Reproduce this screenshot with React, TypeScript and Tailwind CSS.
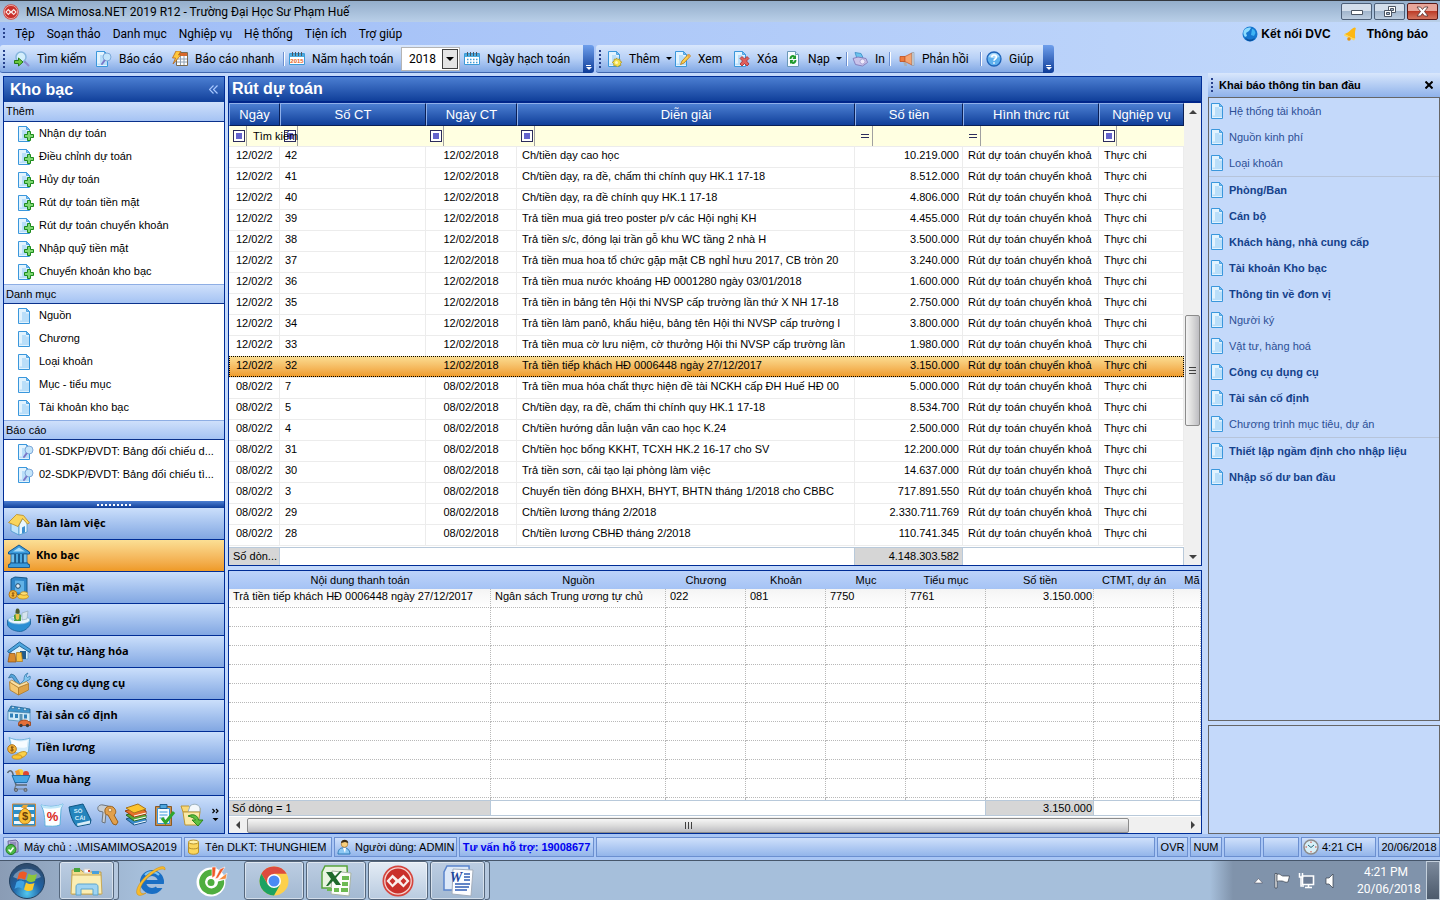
import type { ReactNode } from 'react'
import clsx from 'clsx'

interface IconProps {
  className?: string
}

interface Voucher {
  day: string
  no: string
  date: string
  text: string
  amount: string
  selected?: boolean
}

const menus = ['Tệp', 'Soạn thảo', 'Danh mục', 'Nghiệp vụ', 'Hệ thống', 'Tiện ích', 'Trợ giúp']

const vouchers: Voucher[] = [
  { day: '12/02/2', no: '42', date: '12/02/2018', text: 'Ch/tiền dạy cao học', amount: '10.219.000' },
  { day: '12/02/2', no: '41', date: '12/02/2018', text: 'Ch/tiền dạy, ra đề, chấm thi chính quy HK.1 17-18', amount: '8.512.000' },
  { day: '12/02/2', no: '40', date: '12/02/2018', text: 'Ch/tiền dạy, ra đề chính quy HK.1 17-18', amount: '4.806.000' },
  { day: '12/02/2', no: '39', date: '12/02/2018', text: 'Trả tiền mua giá treo poster p/v các Hội nghị KH', amount: '4.455.000' },
  { day: '12/02/2', no: '38', date: '12/02/2018', text: 'Trả tiền s/c, đóng lại trần gỗ khu WC tầng 2 nhà H', amount: '3.500.000' },
  { day: '12/02/2', no: '37', date: '12/02/2018', text: 'Trả tiền mua hoa tổ chức gặp mặt CB nghỉ hưu 2017, CB tròn 20', amount: '3.240.000' },
  { day: '12/02/2', no: '36', date: '12/02/2018', text: 'Trả tiền mua nước khoáng HĐ 0001280 ngày 03/01/2018', amount: '1.600.000' },
  { day: '12/02/2', no: '35', date: '12/02/2018', text: 'Trả tiền in bảng tên Hội thi NVSP cấp trường lần thứ X NH 17-18', amount: '2.750.000' },
  { day: '12/02/2', no: '34', date: '12/02/2018', text: 'Trả tiền làm panô, khẩu hiệu, bảng tên Hội thi NVSP cấp trường l', amount: '3.800.000' },
  { day: '12/02/2', no: '33', date: '12/02/2018', text: 'Trả tiền mua cờ lưu niệm, cờ thưởng Hội thi NVSP cấp trường lần', amount: '1.980.000' },
  { day: '12/02/2', no: '32', date: '12/02/2018', text: 'Trả tiền tiếp khách HĐ 0006448 ngày 27/12/2017', amount: '3.150.000', selected: true },
  { day: '08/02/2', no: '7', date: '08/02/2018', text: 'Trả tiền mua hóa chất thực hiện đề tài NCKH cấp ĐH Huế HĐ 00', amount: '5.000.000' },
  { day: '08/02/2', no: '5', date: '08/02/2018', text: 'Ch/tiền dạy, ra đề, chấm thi chính quy HK.1 17-18', amount: '8.534.700' },
  { day: '08/02/2', no: '4', date: '08/02/2018', text: 'Ch/tiền hướng dẫn luận văn cao học K.24', amount: '2.500.000' },
  { day: '08/02/2', no: '31', date: '08/02/2018', text: 'Ch/tiền học bổng KKHT, TCXH HK.2 16-17 cho SV', amount: '12.200.000' },
  { day: '08/02/2', no: '30', date: '08/02/2018', text: 'Trả tiền sơn, cải tạo lại phòng làm việc', amount: '14.637.000' },
  { day: '08/02/2', no: '3', date: '08/02/2018', text: 'Chuyển tiền đóng BHXH, BHYT, BHTN tháng 1/2018 cho CBBC', amount: '717.891.550' },
  { day: '08/02/2', no: '29', date: '08/02/2018', text: 'Ch/tiền lương tháng 2/2018', amount: '2.330.711.769' },
  { day: '08/02/2', no: '28', date: '08/02/2018', text: 'Ch/tiền lương CBHĐ tháng 2/2018', amount: '110.741.345' },
]

const setupGroups: { label: string; bold?: boolean }[][] = [
  [{ label: 'Hệ thống tài khoản' }, { label: 'Nguồn kinh phí' }, { label: 'Loại khoản' }],
  [
    { label: 'Phòng/Ban', bold: true },
    { label: 'Cán bộ', bold: true },
    { label: 'Khách hàng, nhà cung cấp', bold: true },
    { label: 'Tài khoản Kho bạc', bold: true },
    { label: 'Thông tin về đơn vị', bold: true },
    { label: 'Người ký' },
    { label: 'Vật tư, hàng hoá' },
    { label: 'Công cụ dụng cụ', bold: true },
    { label: 'Tài sản cố định', bold: true },
    { label: 'Chương trình mục tiêu, dự án' },
  ],
  [
    { label: 'Thiết lập ngầm định cho nhập liệu', bold: true },
    { label: 'Nhập số dư ban đầu', bold: true },
  ],
]

/* ---------- small icons ---------- */

function PageShape() {
  return (
    <>
      <path d="M2.500.5h8l3 3v12h-11z" fill="#e2f3fe" stroke="#3a97dc" />
      <path d="M6 4h4v1.500h3V14H3.500v-1.500H6z" fill="#b9def9" />
      <path d="M10.500.5v3h3z" fill="#7cbdf0" stroke="#3a97dc" strokeWidth=".8" />
    </>
  )
}

function DocIcon({ className }: IconProps) {
  return (
    <svg viewBox="0 0 16 16" className={clsx('size-4 shrink-0', className)} aria-hidden>
      <PageShape />
    </svg>
  )
}

function DocAddIcon() {
  return (
    <svg viewBox="0 0 16 16" className="size-4 shrink-0" aria-hidden>
      <g transform="translate(-2 0)"><PageShape /></g>
      <path d="M9.500 5.500h3v3h3v3h-3v3h-3v-3h-3v-3h3z" fill="#7fd873" stroke="#1c8a1c" />
    </svg>
  )
}

function DocFindIcon() {
  return (
    <svg viewBox="0 0 16 16" className="size-4 shrink-0" aria-hidden>
      <g transform="translate(-2 0)"><PageShape /></g>
      <circle cx="11" cy="6" r="4" fill="#c3e4fa" stroke="#7fa9d8" />
      <path d="M8.500 9.500 6 13" stroke="#7b78c8" strokeWidth="2" strokeLinecap="round" />
    </svg>
  )
}

function SearchGoIcon() {
  return (
    <svg viewBox="0 0 16 16" className="size-4 shrink-0" aria-hidden>
      <path d="m10.500 10.500 4 4" stroke="#8c8cd0" strokeWidth="2" strokeLinecap="round" />
      <circle cx="7" cy="6" r="5" fill="#d3eefb" stroke="#86b5dd" strokeWidth="1.500" />
      <path d="M.5 9.500h4v-2.500l4.500 4-4.500 4v-2.500h-4z" fill="#6cc83c" stroke="#247a18" />
    </svg>
  )
}

function QuickReportIcon() {
  return (
    <svg viewBox="0 0 16 16" className="size-4 shrink-0" aria-hidden>
      <path d="M4.500 1.500h11v13h-11z" fill="#fff" stroke="#7a6a50" />
      <path d="M5 2h10v3H5z" fill="#d8682c" />
      <path d="M5 8h10M5 11h10M8.500 5v9M12 5v9" stroke="#8ea0b4" />
      <path d="M4 0h5L6.500 4H9L1 13l2.500-6H.5z" fill="#ffc83c" stroke="#b4641e" strokeWidth=".8" />
    </svg>
  )
}

function CalendarIcon({ year }: { year?: string }) {
  return (
    <svg viewBox="0 0 16 16" className="size-4 shrink-0" aria-hidden>
      <path d="M.5 2.500h15v11H.5z" fill="#fff" stroke="#3c9bd8" />
      <path d="M1 3h14v3H1z" fill="#4cacdf" />
      <path d="M3.500 1v4M6.500 1v4M9.500 1v4M12.500 1v4" stroke="#4a5560" />
      {year ? (
        <text x="8" y="12" textAnchor="middle" fontSize="6" fontWeight="700" fill="#e8641e" fontFamily="Liberation Sans">{year}</text>
      ) : (
        <path d="M3 8.500h11M3 11.500h11" stroke="#3c9bd8" strokeWidth="1.500" strokeDasharray="1.500 1.500" />
      )}
    </svg>
  )
}

function NewIcon() {
  return (
    <svg viewBox="0 0 16 16" className="size-4 shrink-0" aria-hidden>
      <PageShape />
      <path d="m10.500 7 1.300 1.500 2-.5.2 2 1.800 1-1.300 1.500.3 2-2 .2-1.300 1.300-1.700-1.300-2 .1v-2l-1.500-1.500 1.700-1.200.2-2 2 .2z" fill="#f4e04c" stroke="#a8922a" strokeWidth=".8" />
      <circle cx="10.500" cy="11.500" r="1.500" fill="#fff9c0" />
    </svg>
  )
}

function EditIcon() {
  return (
    <svg viewBox="0 0 16 16" className="size-4 shrink-0" aria-hidden>
      <g transform="translate(-2 0)"><PageShape /></g>
      <path d="M5.500 13.500 7 10l6.500-7 2 2L9 12z" fill="#ffd04a" stroke="#b8802a" strokeWidth=".9" />
      <path d="m12 4.500 1.500-1.500 2 2L14 6.500z" fill="#e8a850" />
    </svg>
  )
}

function DeleteIcon() {
  return (
    <svg viewBox="0 0 16 16" className="size-4 shrink-0" aria-hidden>
      <g transform="translate(-2 0)"><PageShape /></g>
      <path d="m6 7.500 2-2 2.500 2.500L13 5.500l2 2-2.500 2.500 2.500 3-2 2-2.500-2.500L8 15l-2-2 2.500-3z" fill="#e0605c" stroke="#a82828" strokeWidth=".8" />
    </svg>
  )
}

function ReloadIcon() {
  return (
    <svg viewBox="0 0 16 16" className="size-4 shrink-0" aria-hidden>
      <path d="M2.500.5h8l3 3v12h-11z" fill="#f4fbff" stroke="#6a98b8" />
      <path d="M10.500.5v3h3" fill="#cde4f4" stroke="#6a98b8" />
      <path d="M4.500 8c0-4 4-5 5.500-3l1-1v4H7.500L8.500 6.500C7.500 6 6.500 6.500 6.500 8zM11.500 9c0 4-4 5-5.500 3l-1 1V9h3.500L7.500 10.500c1 .5 2 0 2-1.500z" fill="#1f9a2c" />
    </svg>
  )
}

function PrintIcon() {
  return (
    <svg viewBox="0 0 16 16" className="size-4 shrink-0" aria-hidden>
      <path d="m3 1.500 6 1 2 4-6 1z" fill="#6cc4ee" stroke="#3a8cc4" strokeWidth=".8" />
      <path d="M1 7.500 6 6l8 1.500 1.500 4-5 3.500-7-1.500z" fill="#c9c3ea" stroke="#8078b8" strokeWidth=".9" />
      <circle cx="10.500" cy="10.500" r="2.500" fill="#efeafc" stroke="#9890c8" strokeWidth=".7" />
    </svg>
  )
}

function MegaphoneIcon() {
  return (
    <svg viewBox="0 0 16 16" className="size-4 shrink-0" aria-hidden>
      <path d="M4 10h3l1 5H5.500z" fill="#a8b0b8" />
      <path d="M1 5.500h5v5H1z" fill="#ee7a3c" stroke="#c04e1c" strokeWidth=".8" />
      <path d="M6 5.500 13 2v12l-7-3.500z" fill="#f4a472" stroke="#c86030" strokeWidth=".8" />
      <path d="M13 1.500h2v13h-2z" fill="#d0d6dc" stroke="#8c949c" strokeWidth=".6" />
    </svg>
  )
}

function HelpIcon() {
  return (
    <svg viewBox="0 0 16 16" className="size-4 shrink-0" aria-hidden>
      <circle cx="8" cy="8" r="7" fill="#5eb0ee" stroke="#1d62b8" strokeWidth="1.300" />
      <path d="M2.500 6a5.800 5.800 0 0 1 11 0C10 7.500 6 7.500 2.500 6z" fill="#a8d8fa" />
      <path d="M5.800 6.200c0-3 4.600-3 4.600 0C10.400 8 8 8 8 9.800M8 11.200v1.500" fill="none" stroke="#fff" strokeWidth="1.600" />
    </svg>
  )
}

function MisaLogo({ className }: IconProps) {
  return (
    <svg viewBox="0 0 32 32" className={clsx('shrink-0', className)} aria-hidden>
      <circle cx="16" cy="16" r="15.500" fill="#d5443d" />
      <circle cx="16" cy="16" r="13.200" fill="#c9302b" stroke="#f6d4d0" strokeWidth="1.300" />
      <path d="M4.500 16 10.500 9.500l5.500 5 5.500-5 6 6.500-6 6.500-5.500-5-5.500 5z" fill="#f9efed" />
      <path d="m10.500 13 3 3-3 3.500-3-3.500zM21.500 13l3 3-3 3.500-3-3.500z" fill="#c9302b" />
    </svg>
  )
}

function GlobeIcon() {
  return (
    <svg viewBox="0 0 16 16" className="size-4 shrink-0" aria-hidden>
      <circle cx="8" cy="8" r="7.500" fill="#1577d0" />
      <path d="M2 4.500C4 1.500 8 1 9 2L7 5 4 7l1 3-2 1C1 9 1 6 2 4.500z" fill="#8cdcff" />
      <path d="M10 3c2 0 3 2 3.500 4L12 10 9 9z" fill="#3fb4f4" />
      <path d="M3 11.500c3 2.500 7 3 10 0-1 2.500-3 3.800-5 3.800S4 14 3 11.500z" fill="#0b4f9c" />
    </svg>
  )
}

function BellIcon() {
  return (
    <svg viewBox="0 0 16 16" className="size-4 shrink-0" aria-hidden>
      <path d="M11.500 1.500c1.500 0 1.500 1 1 2-.8 3-.5 5-.3 9L10 12.500 1.500 8C7 6.500 8 2.500 11.500 1.500z" fill="#fdb813" />
      <path d="M1.500 8 12 13l-1 1.500L1 9.500z" fill="#ffd95a" />
      <circle cx="6" cy="13" r="1.800" fill="#e8930c" />
    </svg>
  )
}

/* ---------- navigation icons ---------- */

function NavSvg({ children }: { children: ReactNode }) {
  return (
    <svg viewBox="0 0 24 24" className="size-6 shrink-0" aria-hidden>
      {children}
    </svg>
  )
}

const houseIcon = (
  <NavSvg>
    <path d="M4 11v8l8 4V13z" fill="#bfe4fb" stroke="#4a98cc" strokeWidth=".8" />
    <path d="M12 13v10l8-3v-9l-4-5z" fill="#eaf6fe" stroke="#4a98cc" strokeWidth=".8" />
    <path d="M15 15.500 18 14v6.500l-3 1z" fill="#3d8fd0" />
    <path d="m1.500 10.500 8-8 7 1 6 7.500-2 1-5-5.500-4.500 8z" fill="#f9d55c" stroke="#b98a24" strokeWidth=".8" />
  </NavSvg>
)

const bankIcon = (
  <NavSvg>
    <path d="M1.500 8 12 1l10.500 7v2h-21z" fill="#3a9bdc" stroke="#14578f" />
    <path d="M6 7.500 12 3.500l6 4z" fill="#a8dcf8" />
    <path d="M4 10h3.500v9H4zM16.500 10H20v9h-3.500z" fill="#6fc0ee" stroke="#14578f" strokeWidth=".7" />
    <path d="M7.500 10h9v9h-9z" fill="#17598f" />
    <path d="M9 10h2v9H9zM13 10h2v9h-2z" fill="#4aa8e0" />
    <path d="M3 19h18v1.500h1.500v3h-21v-3H3z" fill="#3a9bdc" stroke="#14578f" strokeWidth=".9" />
  </NavSvg>
)

const safeIcon = (
  <NavSvg>
    <path d="m4 3 4-2 12 1v15l-3 2-13-1z" fill="#2f86c8" stroke="#12507f" strokeWidth=".9" />
    <path d="M8 4.500 17 5v12l-9-1z" fill="#62b2e6" />
    <circle cx="11" cy="10" r="2.300" fill="#e0eef8" stroke="#1a4668" />
    <circle cx="6" cy="18.500" r="4" fill="#f4b73a" stroke="#b4761a" />
    <ellipse cx="16" cy="20.500" rx="5.500" ry="2.500" fill="#fbd24a" stroke="#c48c1e" strokeWidth=".8" />
    <ellipse cx="17" cy="17.500" rx="3.500" ry="1.800" fill="#fde078" stroke="#c48c1e" strokeWidth=".8" />
    <path d="M6 16v5M7.500 17.200h-2.500l2 2.500H4.500" stroke="#8a5410" fill="none" strokeWidth=".8" />
  </NavSvg>
)

const tellerIcon = (
  <NavSvg>
    <path d="M.5 12c4 4 19 4 23-1v5c-2 4-6 7-10 7.500C8 23.500 2 21 .5 17z" fill="#2b8fd4" stroke="#155f97" strokeWidth=".8" />
    <ellipse cx="12" cy="12" rx="11" ry="4" fill="#e9f6fd" stroke="#7db8dc" strokeWidth=".8" />
    <path d="m7 7 4-2 3 2v6H7z" fill="#4c9e3c" />
    <path d="M8.500 6h4l-.5 5-1.500 1-1.500-1z" fill="#e8c04c" />
    <path d="M10.500.5c2 0 2.500 2 2 5h-4c0-3 0-5 2-5z" fill="#4b5b2c" />
    <path d="m15 5 6-2-1 8-5 1z" fill="#d6e4ee" stroke="#8ca4b4" strokeWidth=".6" />
    <path d="m4 9 4 2-2 2-3-2z" fill="#a8cfe8" />
  </NavSvg>
)

const warehouseIcon = (
  <NavSvg>
    <path d="M4 10 13 4l8 6v9H4z" fill="#d8eefb" stroke="#5a9cc4" strokeWidth=".7" />
    <path d="m.5 11 12-9 11 7.500-.5 3-10.500-6.500L2 13z" fill="#4ea6de" stroke="#1b5f94" strokeWidth=".9" />
    <path d="M13 11h6v8h-6z" fill="#1f5c8c" />
    <path d="M2.500 13.500H8l1 8.500H1z" fill="#d88a2e" stroke="#8c4d10" strokeWidth=".7" />
    <path d="M9.500 12.500h5l1 9h-6z" fill="#f7c142" stroke="#a4741a" strokeWidth=".7" />
  </NavSvg>
)

const toolboxIcon = (
  <NavSvg>
    <path d="M7 3 4 2 1.500 6 5 5l7 10 2-1.500L8 4z" fill="#55a5dc" stroke="#2a648c" strokeWidth=".7" />
    <path d="m21 1-2 3 1.500 1.500L23 4c1 3-1 4.500-3 4.500L14 15l-2-2 5-5c0-4 1-6 4-7z" fill="#86c8f0" stroke="#2a74a8" strokeWidth=".7" />
    <path d="m2.500 10 9 5.500V23L3 18z" fill="#f5c873" stroke="#ad7a2a" strokeWidth=".8" />
    <path d="m11.500 15.500 10-4v6.500l-10 5z" fill="#dfa347" stroke="#ad7a2a" strokeWidth=".8" />
    <path d="m2.500 10 2-2 8 4.500 7-3 2 2-10 4z" fill="#fbe0a4" stroke="#ad7a2a" strokeWidth=".7" />
  </NavSvg>
)

const assetIcon = (
  <NavSvg>
    <path d="M1 7.500 4 2l19 3v4z" fill="#3d93cc" stroke="#1c5f90" strokeWidth=".8" />
    <path d="M1 7.500 23 9v9l-22-2z" fill="#cfe9f8" stroke="#4a8cb8" strokeWidth=".8" />
    <path d="M3 9.500h3v4H3zM8 10h3v4H8zM17 10.500h3v4h-3z" fill="#2f7fb8" />
    <path d="M12.500 10h3v7h-3z" fill="#5b92b4" />
    <path d="M4 4.500 6 2l2 2.500zM10 5.200 12 3l2 2.500zM16 6l2-2.500L20 6.500z" fill="#dff2fc" stroke="#1c5f90" strokeWidth=".5" />
    <path d="M11.500 19c1-3 8-4 10-1.500l2 .5v3.500h-12z" fill="#e4703a" stroke="#9a3f14" strokeWidth=".8" />
    <circle cx="14" cy="21.500" r="1.700" fill="#3c3c3c" />
    <circle cx="20.500" cy="21.500" r="1.700" fill="#3c3c3c" />
  </NavSvg>
)

const salaryIcon = (
  <NavSvg>
    <path d="M2 1.500c6 3 14 3 21 .5-1 5-1 10-1.500 14C15 19 8 17 4 14c0-4-.5-9-2-12.500z" fill="#d4ecfb" stroke="#6aaed8" strokeWidth=".9" />
    <path d="M4 3c6 3 12 3 17 1-1 3-1 5-1 7C14 13 8 11 5 9z" fill="#f6fcff" />
    <ellipse cx="14" cy="19" rx="6" ry="2.800" transform="rotate(-22 14 19)" fill="#fbd24a" stroke="#c48c1e" strokeWidth=".8" />
    <ellipse cx="10" cy="21" rx="5" ry="2.200" fill="#f9c534" stroke="#c48c1e" strokeWidth=".8" />
    <circle cx="5" cy="13" r="4.300" fill="#f4b73a" stroke="#b4761a" />
    <path d="M5 10v6M6.800 11.200H4l2.500 3H3.200" stroke="#7a4a0c" fill="none" strokeWidth=".9" />
  </NavSvg>
)

const cartIcon = (
  <NavSvg>
    <path d="M.5 5c1.500-3 3.500-3 5-.5L9 17h11" fill="none" stroke="#5c6872" strokeWidth="1.500" />
    <circle cx="13" cy="4.500" r="3.500" fill="#fbcf3c" />
    <path d="m8 3 4-1 2 6-4 1z" fill="#f09a2c" />
    <circle cx="19" cy="6" r="3" fill="#dc4632" />
    <path d="M5 7.500h18L20 14.500H8z" fill="#49a7e4" stroke="#1c6aa4" strokeWidth=".9" />
    <path d="M9 17 7.500 21H20" fill="none" stroke="#707c88" strokeWidth="1.200" />
    <circle cx="9" cy="22" r="1.600" fill="#8a949c" stroke="#444" strokeWidth=".6" />
    <circle cx="18.500" cy="22" r="1.600" fill="#8a949c" stroke="#444" strokeWidth=".6" />
  </NavSvg>
)

const navItems = [
  { label: 'Bàn làm việc', icon: houseIcon },
  { label: 'Kho bạc', icon: bankIcon, active: true },
  { label: 'Tiền mặt', icon: safeIcon },
  { label: 'Tiền gửi', icon: tellerIcon },
  { label: 'Vật tư, Hàng hóa', icon: warehouseIcon },
  { label: 'Công cụ dụng cụ', icon: toolboxIcon },
  { label: 'Tài sản cố định', icon: assetIcon },
  { label: 'Tiền lương', icon: salaryIcon },
  { label: 'Mua hàng', icon: cartIcon },
]

const shortcuts = [
  {
    label: 'Ngân sách',
    icon: (
      <NavSvg>
        <path d="M.5 1h23v22H.5z" fill="#2d8fc8" stroke="#d28a3c" />
        <path d="M2 4h20v3H2zM2 11h20v3H2zM2 18h20v3H2z" fill="#eef8fd" />
        <path d="m9 5 2-3h5l-1.500 3z" fill="#e8a83a" />
        <path d="M13 5c8 3 8 16 0 16S5 8 13 5z" fill="#f8bf35" stroke="#b4761a" />
        <text x="13" y="17" textAnchor="middle" fontSize="11" fontWeight="700" fill="#6a3f08" fontFamily="Liberation Sans">$</text>
      </NavSvg>
    ),
  },
  {
    label: 'Thuế',
    icon: (
      <NavSvg>
        <path d="M1 2c7 2 15 2 22-1-1 3-2 4-2 6l-1 15c-5 2-10 1-15 1C5 16 4 7 1 2z" fill="#fdfefe" stroke="#5cb0dc" />
        <path d="M1 2c7 2 15 2 22-1l-1 3C15 6 8 6 3 5z" fill="#bfe6f8" />
        <text x="12.500" y="18" textAnchor="middle" fontSize="13" fontWeight="700" fill="#d8281e" fontFamily="Liberation Sans">%</text>
      </NavSvg>
    ),
  },
  {
    label: 'Sổ cái',
    icon: (
      <NavSvg>
        <path d="m1 4 14-3 8 16-1 4-13 2.500C5 20 2 12 1 4z" fill="#2484bc" stroke="#0f5582" />
        <path d="m9 20.500 13-3v3L9.500 23z" fill="#d9edf8" />
        <text x="10" y="10" textAnchor="middle" fontSize="6" fontWeight="700" fill="#d4effc" fontFamily="Liberation Sans">SỔ</text>
        <text x="12" y="16.500" textAnchor="middle" fontSize="6" fontWeight="700" fill="#d4effc" fontFamily="Liberation Sans">CÁI</text>
      </NavSvg>
    ),
  },
  {
    label: 'Phân quyền',
    icon: (
      <NavSvg>
        <path d="M3 8c-3-3 0-7 4-6l5 1c3 1 3 5 0 6l-2 1-1 10-3-1 1-10z" fill="#c8ced4" stroke="#6c747c" />
        <path d="M9 9c-1-5 4-7 8-5 4 3 3 7 1 8l4 7-2 3-3-1-5-9c-2 0-3-1-3-3z" fill="#e2a04c" stroke="#98601c" />
        <circle cx="14" cy="7" r="1.800" fill="#f8e4c0" stroke="#98601c" strokeWidth=".6" />
      </NavSvg>
    ),
  },
  {
    label: 'Sổ sách',
    icon: (
      <NavSvg>
        <path d="m2 16 8 6 12-3v-3l-8-4z" fill="#3a8ccc" stroke="#1d5482" />
        <path d="m2 12 8 6 12-3v-3l-8-4z" fill="#58a83c" stroke="#2c661c" />
        <path d="m1 8 9 6 12-3V8l-8-4z" fill="#e8702c" stroke="#963c10" />
        <path d="m2 5 12-4 8 5-12 4z" fill="#fcc42e" stroke="#a8741a" />
        <path d="m10 13 12-3M10 17l12-3M10 21l12-3" stroke="#fff" />
      </NavSvg>
    ),
  },
  {
    label: 'Kiểm tra',
    icon: (
      <NavSvg>
        <path d="M3.500 3.500h16v19h-16z" fill="#c98d4c" stroke="#8a5a24" />
        <path d="M5.500 5.500h12v15h-12z" fill="#f4fbff" stroke="#3a97dc" />
        <path d="M8 1.500h7v4H8z" fill="#4ea6de" stroke="#1d5f94" />
        <path d="M7.500 9h8M7.500 12h8M7.500 15h5" stroke="#3a97dc" />
        <path d="m10 15 3.500 4.500L22 9" fill="none" stroke="#2fa52c" strokeWidth="3" />
      </NavSvg>
    ),
  },
  {
    label: 'Chuyển đổi',
    icon: (
      <NavSvg>
        <path d="M1 3h8l2 2h9v4H3z" fill="#f9d978" stroke="#bd9634" />
        <path d="M10 3c3-3 9-2 10 2v4H8z" fill="#f3f8fb" stroke="#9ab0bc" />
        <path d="M3 9h17l-2 13H5z" fill="#fae9a8" stroke="#bd9634" />
        <path d="M8 13c6-3 10 0 10.500 4H23l-5 6-6-6h3.500c-1-2-4-3-7.500-4z" fill="#5fc040" stroke="#2c861c" />
      </NavSvg>
    ),
  },
]

/* ---------- title, menu, toolbar ---------- */

function TitleBar() {
  return (
    <header className="flex h-[22px] items-center border-t border-[#33373d] bg-linear-to-b from-[#94aecb] to-[#b9cfe8] pl-[3px] pr-[2px]">
      <MisaLogo className="size-4" />
      <h1 className="ml-[7px] flex-1 text-[12px] text-black">MISA Mimosa.NET 2019 R12 - Trường Đại Học Sư Phạm Huế</h1>
      <div className="flex h-[17px] gap-[2px]">
        <button aria-label="Thu nhỏ" className="flex w-[31px] items-center justify-center rounded-[2px] border border-[#4c5f78] bg-linear-to-b from-[#d3deeb] from-45% via-[#a2b6cd] via-50% to-[#bccde0]">
          <svg viewBox="0 0 12 6" className="h-[6px] w-3"><path d="M.5 1.500h11v4H.5z" fill="#fff" stroke="#4b5563" /></svg>
        </button>
        <button aria-label="Khôi phục" className="flex w-[31px] items-center justify-center rounded-[2px] border border-[#4c5f78] bg-linear-to-b from-[#d3deeb] from-45% via-[#a2b6cd] via-50% to-[#bccde0]">
          <svg viewBox="0 0 12 11" className="h-[11px] w-3">
            <path d="M4.500.5h7v6h-7z" fill="#fff" stroke="#4b5563" />
            <path d="M6.500 2.500h3v2h-3z" fill="#a2b6cd" stroke="#4b5563" />
            <path d="M.5 4.500h7v6h-7z" fill="#fff" stroke="#4b5563" />
            <path d="M2.500 6.500h3v2h-3z" fill="#a2b6cd" stroke="#4b5563" />
          </svg>
        </button>
        <button aria-label="Đóng" className="flex w-[31px] items-center justify-center rounded-[2px] border border-[#5a1a18] bg-linear-to-b from-[#e8a69a] from-45% via-[#bc3c28] via-50% to-[#d4755f]">
          <svg viewBox="0 0 13 11" className="h-[11px] w-[13px]">
            <path d="M1 1h3.500l2 2.500L8.500 1H12L8.500 5.500 12 10H8.500L6.500 7.500 4.500 10H1l3.500-4.500z" fill="#fff" stroke="#53302e" strokeWidth=".8" />
          </svg>
        </button>
      </div>
    </header>
  )
}

function Grip({ className }: IconProps) {
  return (
    <span className={clsx('w-[2px] shrink-0 bg-[repeating-linear-gradient(to_bottom,#27418c_0_2px,transparent_2px_4px)]', className)} />
  )
}

function MenuBar() {
  return (
    <nav className="flex h-[23px] items-center pl-[3px] pr-3 text-[12px]">
      <Grip className="mr-[10px] h-[11px]" />
      <div className="flex flex-1 gap-3">
        {menus.map(m => <button key={m}>{m}</button>)}
      </div>
      <a href="#dvc" className="flex items-center gap-[3px] font-['Liberation_Sans',sans-serif] font-bold">
        <GlobeIcon />
        Kết nối DVC
      </a>
      <a href="#notify" className="ml-3 flex items-center gap-2 font-['Liberation_Sans',sans-serif] font-bold">
        <BellIcon />
        Thông báo
      </a>
    </nav>
  )
}

function ToolButton({ icon, label, arrow, className }: { icon: ReactNode; label: string; arrow?: boolean; className: string }) {
  return (
    <button className={clsx('flex shrink-0 items-center gap-[7px] whitespace-nowrap', className)}>
      {icon}
      {label}
      {arrow && <span className="-ml-px border-x-[3px] border-t-[3px] border-x-transparent border-t-black" />}
    </button>
  )
}

function ToolSeparator() {
  return <span className="mr-[4px] h-[14px] w-[2px] shrink-0 border-l border-[#6c8fd0] bg-white" />
}

function BarEnd() {
  return (
    <span className="flex h-[28px] w-[11px] shrink-0 flex-col items-center justify-end gap-px rounded-r-[3px] bg-linear-to-b from-[#6f9fec] to-[#0c3b98] pb-[3px]">
      <span className="h-px w-[5px] bg-white" />
      <span className="border-x-[3px] border-t-[3px] border-x-transparent border-t-white" />
    </span>
  )
}

function Toolbar() {
  return (
    <div className="flex h-[28px] text-[12px]">
      <div className="flex items-center rounded-l-[3px] border-b border-[#3f66ae] bg-linear-to-b from-[#d9e7fc] via-[#b7d0f6] to-[#82a8e4] pl-[3px]">
        <Grip className="mr-[9px] h-[18px]" />
        <ToolButton icon={<SearchGoIcon />} label="Tìm kiếm" className="w-[82px]" />
        <ToolButton icon={<DocFindIcon />} label="Báo cáo" className="w-[76px]" />
        <ToolButton icon={<QuickReportIcon />} label="Báo cáo nhanh" className="w-[111px]" />
        <ToolSeparator />
        <label htmlFor="year" className="flex w-[112px] shrink-0 items-center gap-[7px] whitespace-nowrap">
          <CalendarIcon year="2015" />
          Năm hạch toán
        </label>
        <span className="relative mr-[4px] h-[24px] w-[59px] border border-[#b4b4b4] bg-white">
          <select id="year" className="h-full w-full appearance-none bg-transparent pl-[7px] outline-none">
            <option>2018</option>
          </select>
          <span className="pointer-events-none absolute top-px right-px flex h-[20px] w-[16px] items-center justify-center border border-[#404040] bg-[#e4e4e4]">
            <span className="border-x-4 border-t-4 border-x-transparent border-t-black" />
          </span>
        </span>
        <ToolButton icon={<CalendarIcon />} label="Ngày hạch toán" className="w-[119px]" />
      </div>
      <BarEnd />
      <div className="ml-[2px] flex items-center rounded-l-[3px] border-b border-[#3f66ae] bg-linear-to-b from-[#d9e7fc] via-[#b7d0f6] to-[#82a8e4] pl-[3px]">
        <Grip className="mr-[5px] h-[18px]" />
        <ToolButton icon={<NewIcon />} label="Thêm" arrow className="w-[69px]" />
        <ToolButton icon={<EditIcon />} label="Xem" className="w-[59px]" />
        <ToolButton icon={<DeleteIcon />} label="Xóa" className="w-[51px]" />
        <ToolButton icon={<ReloadIcon />} label="Nạp" arrow className="w-[61px]" />
        <ToolSeparator />
        <ToolButton icon={<PrintIcon />} label="In" className="w-[37px]" />
        <ToolSeparator />
        <span className="w-[4px]" />
        <ToolButton icon={<MegaphoneIcon />} label="Phản hồi" className="w-[81px]" />
        <ToolSeparator />
        <ToolButton icon={<HelpIcon />} label="Giúp" className="w-[57px]" />
      </div>
      <BarEnd />
    </div>
  )
}

/* ---------- left pane ---------- */

function SideGroup({ title, items, icon, divided }: { title: string; items: string[]; icon: ReactNode; divided?: boolean }) {
  return (
    <section className="pb-px">
      <h3 className={clsx('flex h-[20px] items-center border-b border-[#0a318c] bg-linear-to-b from-[#cfe0fb] to-[#a5c3f3] pl-[2px]', divided && 'border-t border-t-[#8eaee4]')}>
        {title}
      </h3>
      <ul>
        {items.map(item => (
          <li key={item}>
            <a href="#item" className="flex h-[23px] items-center gap-[5px] pl-[14px] whitespace-nowrap">
              {icon}
              {item}
            </a>
          </li>
        ))}
      </ul>
    </section>
  )
}

function SidePane() {
  return (
    <aside className="mt-[3px] flex w-[222px] shrink-0 flex-col border border-[#002d96] bg-white text-[11px]">
      <div className="flex h-[25px] shrink-0 items-center justify-between bg-linear-to-b from-[#4c7fd2] to-[#103f9a] pr-[6px] pl-[6px]">
        <h2 className="text-[16px] font-bold text-white">Kho bạc</h2>
        <button aria-label="Thu gọn">
          <svg viewBox="0 0 9 9" className="size-[9px]"><path d="M4.500.5.5 4.500l4 4M8.500.5l-4 4 4 4" fill="none" stroke="#a8c8ff" strokeWidth="1.200" /></svg>
        </button>
      </div>
      <div className="min-h-0 flex-1">
        <SideGroup
          title="Thêm"
          icon={<DocAddIcon />}
          items={['Nhận dự toán', 'Điều chỉnh dự toán', 'Hủy dự toán', 'Rút dự toán tiền mặt', 'Rút dự toán chuyển khoản', 'Nhập quỹ tiền mặt', 'Chuyển khoản kho bạc']}
        />
        <SideGroup title="Danh mục" divided icon={<DocIcon className="-ml-[2px] mr-[2px]" />} items={['Nguồn', 'Chương', 'Loại khoản', 'Mục - tiểu mục', 'Tài khoản kho bạc']} />
        <SideGroup title="Báo cáo" divided icon={<DocFindIcon />} items={['01-SDKP/ĐVDT: Bảng đối chiếu d...', '02-SDKP/ĐVDT: Bảng đối chiếu tì...']} />
      </div>
      <div className="flex h-[7px] shrink-0 items-center justify-center bg-linear-to-b from-[#4c7fd2] to-[#103f9a]">
        <span className="h-[2px] w-[35px] bg-[repeating-linear-gradient(to_right,#fff_0_2px,transparent_2px_4px)]" />
      </div>
      <nav className="shrink-0">
        {navItems.map(n => (
          <button
            key={n.label}
            className={clsx(
              "flex h-8 w-full items-center gap-[5px] border-b border-[#002d96] bg-linear-to-b pl-[3px] font-['Open_Sans',sans-serif] text-[11px] font-bold",
              n.active ? 'from-[#fbdf94] to-[#ee9a24]' : 'from-[#cbdffb] to-[#82a7e2]',
            )}
          >
            {n.icon}
            {n.label}
          </button>
        ))}
      </nav>
      <div className="flex h-[37px] shrink-0 items-center gap-[4px] bg-linear-to-b from-[#cbdffb] to-[#82a7e2] pl-[8px]">
        {shortcuts.map(s => <button key={s.label} aria-label={s.label}>{s.icon}</button>)}
        <button aria-label="Thêm nút" className="ml-[4px]">
          <svg viewBox="0 0 7 14" className="h-[14px] w-[7px]">
            <path d="m.5 1 2 2-2 2M4 1l2 2-2 2" fill="none" stroke="#000" strokeWidth="1.200" />
            <path d="M.5 10h6l-3 3z" />
          </svg>
        </button>
      </div>
    </aside>
  )
}

/* ---------- grids ---------- */

function FilterCell({ id, equals, hint }: { id: string; equals?: boolean; hint?: string }) {
  return (
    <td className="h-[20px] bg-[#ffffe1] p-0">
      <div className="relative flex h-full">
        <button aria-label="Điều kiện lọc" className="flex w-[18px] shrink-0 items-center justify-end border-r border-[#a0a0a0] pr-px">
          {equals ? (
            <span className="mr-[2px] h-[4px] w-2 border-y border-[#2c2c5c]" />
          ) : (
            <span className="flex size-3 items-center justify-center border border-[#2c2c5c] bg-white">
              <span className="size-[6px] bg-[#6464cc]" />
            </span>
          )}
        </button>
        {hint && <label htmlFor={id} className="absolute top-[2px] left-6 z-10 whitespace-nowrap">{hint}</label>}
        <input id={id} aria-label={hint ?? 'Lọc'} className="w-0 min-w-0 flex-1 bg-transparent outline-none" />
      </div>
    </td>
  )
}

function VoucherGrid() {
  const heads = ['Ngày', 'Số CT', 'Ngày CT', 'Diễn giải', 'Số tiền', 'Hình thức rút', 'Nghiệp vụ']
  return (
    <section className="flex shrink-0 flex-col border border-[#002d96] bg-white">
      <h2 className="flex h-[26px] items-center border-b-2 border-[#00268a] bg-linear-to-b from-[#4c7fd2] to-[#103f9a] pl-[3px] text-[16px] font-bold text-white">
        Rút dự toán
      </h2>
      <div className="flex">
        <table className="w-0 flex-1 table-fixed border-separate border-spacing-0">
          <colgroup>
            <col className="w-[51px]" />
            <col className="w-[146px]" />
            <col className="w-[91px]" />
            <col />
            <col className="w-[108px]" />
            <col className="w-[136px]" />
            <col className="w-[85px]" />
          </colgroup>
          <thead>
            <tr>
              {heads.map(h => (
                <th key={h} className="h-[23px] border border-t-[#8fb0ea] border-r-[#0a1f55] border-b-[#0a1f55] border-l-[#8fb0ea] bg-linear-to-b from-[#4c7fd2] to-[#103f9a] p-0 text-[13px] font-normal text-white">
                  {h}
                </th>
              ))}
            </tr>
          </thead>
          <tbody>
            <tr>
              <FilterCell id="f-day" hint="Tìm kiếm" />
              <FilterCell id="f-no" />
              <FilterCell id="f-date" />
              <FilterCell id="f-text" />
              <FilterCell id="f-amount" equals />
              <FilterCell id="f-kind" equals />
              <FilterCell id="f-op" />
            </tr>
            {vouchers.map(v => (
              <tr
                key={v.no + v.date}
                className={clsx(
                  '*:h-[21px] *:overflow-hidden *:border-t *:border-r *:px-0 *:pt-0 *:pb-[4px] *:leading-4 *:whitespace-nowrap',
                  v.selected
                    ? 'bg-linear-to-b from-[#fbdf94] to-[#ee9a24] outline-1 -outline-offset-1 outline-dotted outline-black *:border-transparent'
                    : '*:border-[#ececec]',
                )}
              >
                <td><span className="pl-[7px]">{v.day}</span></td>
                <td><span className="pl-[5px]">{v.no}</span></td>
                <td className="text-center">{v.date}</td>
                <td><span className="pl-[5px]">{v.text}</span></td>
                <td className="text-right"><span className="pr-[3px]">{v.amount}</span></td>
                <td><span className="pl-[5px]">Rút dự toán chuyển khoả</span></td>
                <td><span className="pl-[5px]">Thực chi</span></td>
              </tr>
            ))}
            <tr><td colSpan={7} className="h-[2px] border-t border-[#ececec] p-0" /></tr>
          </tbody>
          <tfoot>
            <tr className="*:h-[18px] *:border-t *:border-r *:border-[#b8c9da] *:p-0">
              <td className="bg-[#d6d6d6]"><span className="pl-[4px] whitespace-nowrap">Số dòn...</span></td>
              <td colSpan={3} />
              <td className="bg-[#d6d6d6] text-right"><span className="pr-[3px]">4.148.303.582</span></td>
              <td colSpan={2} />
            </tr>
          </tfoot>
        </table>
        <div className="flex w-[17px] flex-col items-center bg-[#f0f0f0]">
          <button aria-label="Lên" className="flex h-[17px] items-center">
            <span className="border-x-4 border-b-4 border-x-transparent border-b-[#404040]" />
          </button>
          <div className="grow-[195] basis-0" />
          <div className="flex h-[111px] w-[15px] flex-col items-center justify-center gap-[2px] rounded-[2px] border border-[#8c8c8c] bg-linear-to-r from-[#f4f4f4] via-[#dadada] to-[#bdbdc2]">
            <span className="h-px w-[7px] bg-[#404040]" />
            <span className="h-px w-[7px] bg-[#404040]" />
            <span className="h-px w-[7px] bg-[#404040]" />
          </div>
          <div className="grow-[122] basis-0" />
          <button aria-label="Xuống" className="flex h-[17px] items-center">
            <span className="border-x-4 border-t-4 border-x-transparent border-t-[#404040]" />
          </button>
        </div>
      </div>
    </section>
  )
}

function DetailGrid() {
  const heads = ['Nội dung thanh toán', 'Nguồn', 'Chương', 'Khoản', 'Mục', 'Tiểu mục', 'Số tiền', 'CTMT, dự án']
  return (
    <section className="mt-[4px] flex min-h-0 flex-1 flex-col overflow-hidden border border-[#002d96] bg-white">
      <table className="w-full flex-1 table-fixed border-separate border-spacing-0">
        <colgroup>
          <col />
          <col className="w-[175px]" />
          <col className="w-[80px]" />
          <col className="w-[80px]" />
          <col className="w-[80px]" />
          <col className="w-[80px]" />
          <col className="w-[108px]" />
          <col className="w-[80px]" />
          <col className="w-[27px]" />
        </colgroup>
        <thead>
          <tr className="*:h-[18px] *:bg-linear-to-b *:from-[#bdd3f9] *:to-[#a5c3f5] *:p-0 *:font-normal *:whitespace-nowrap">
            {heads.map(h => <th key={h}>{h}</th>)}
            <th><span className="pl-[9px]">Mã</span></th>
          </tr>
        </thead>
        <tbody>
          <tr className="bg-linear-to-b from-[#f4f4f4] to-white *:h-[19px] *:border-r *:border-b *:border-dotted *:border-[#b8b8b8] *:p-0 *:pb-[4px] *:pl-[4px] *:leading-[14px] *:whitespace-nowrap">
            <td>Trả tiền tiếp khách HĐ 0006448 ngày 27/12/2017</td>
            <td>Ngân sách Trung ương tự chủ</td>
            <td>022</td>
            <td>081</td>
            <td>7750</td>
            <td>7761</td>
            <td className="text-right"><span className="pr-px">3.150.000</span></td>
            <td />
            <td />
          </tr>
          {Array.from({ length: 10 }, (_, r) => (
            <tr key={r} className="*:h-[19px] *:border-r *:border-b *:border-dotted *:border-[#b8b8b8] *:p-0">
              {Array.from({ length: 9 }, (_, c) => <td key={c} />)}
            </tr>
          ))}
          <tr className="*:h-[2px] *:border-r *:border-dotted *:border-[#b8b8b8] *:p-0">
            {Array.from({ length: 9 }, (_, c) => <td key={c} />)}
          </tr>
        </tbody>
        <tfoot>
          <tr className="*:h-[16px] *:border-y *:border-r *:border-[#b8c9da] *:p-0 *:leading-[14px]">
            <td className="bg-[#d6d6d6]"><span className="pl-[3px]">Số dòng = 1</span></td>
            <td colSpan={5} />
            <td className="bg-[#d6d6d6] text-right"><span className="pr-px">3.150.000</span></td>
            <td colSpan={2} />
          </tr>
        </tfoot>
      </table>
      <div className="mt-px flex h-4 shrink-0 items-center bg-[#f0f0f0]">
        <button aria-label="Trái" className="flex w-[18px] justify-center">
          <span className="border-y-4 border-r-4 border-y-transparent border-r-[#404040]" />
        </button>
        <div className="flex h-[15px] flex-1 items-center justify-center gap-[2px] rounded-[2px] border border-[#8c8c8c] bg-linear-to-b from-[#f6f6f6] via-[#dcdcdc] to-[#bdbdc2]">
          <span className="h-[7px] w-px bg-[#404040]" />
          <span className="h-[7px] w-px bg-[#404040]" />
          <span className="h-[7px] w-px bg-[#404040]" />
        </div>
        <div className="w-[55px]" />
        <button aria-label="Phải" className="flex w-[17px] justify-center">
          <span className="border-y-4 border-l-4 border-y-transparent border-l-[#404040]" />
        </button>
      </div>
    </section>
  )
}

/* ---------- right pane ---------- */

function SetupPane() {
  return (
    <aside className="flex w-[232px] shrink-0 flex-col text-[11px]">
      <div className="flex h-[24px] shrink-0 items-center bg-linear-to-b from-[#d9e7fc] to-[#8fb2ea] pr-[7px] pl-[3px]">
        <Grip className="mr-[6px] h-[14px]" />
        <h2 className="flex-1 text-[11px] font-bold">Khai báo thông tin ban đầu</h2>
        <button aria-label="Đóng">
          <svg viewBox="0 0 8 8" className="size-2"><path d="m.5.5 7 7m0-7-7 7" stroke="#000" strokeWidth="2" /></svg>
        </button>
      </div>
      <div className="flex-1 border border-[#666] bg-[#c4d9fa]">
        {setupGroups.map((group, i) => (
          <ul key={i} className={clsx(i > 0 && 'border-t border-[#b6c4da]')}>
            {group.map(g => (
              <li key={g.label}>
                <a href="#setup" className={clsx('flex h-[26px] items-center gap-[4px] whitespace-nowrap', g.bold ? 'font-bold text-[#15428b]' : 'text-[#2c4f96]')}>
                  <DocIcon />
                  {g.label}
                </a>
              </li>
            ))}
          </ul>
        ))}
      </div>
      <div className="mt-[4px] h-[109px] shrink-0 border border-[#666] bg-[#c4d9fa]" />
    </aside>
  )
}

/* ---------- status bar and taskbar ---------- */

function StatusCell({ className, children }: { className?: string; children?: ReactNode }) {
  return (
    <div className={clsx('flex h-5 items-center gap-[3px] overflow-hidden border border-[#6b8fd0] bg-linear-to-b from-[#cfe0fb] to-[#93b5ea] whitespace-nowrap', className)}>
      {children}
    </div>
  )
}

function StatusBar() {
  return (
    <footer className="flex h-[26px] shrink-0 items-center gap-[2px] bg-[#a9c6f5] pl-[3px] text-[11px]">
      <StatusCell className="w-[179px] pl-px">
        <svg viewBox="0 0 16 16" className="size-4 shrink-0" aria-hidden>
          <path d="m3 2 8-1 2 2v10l-9 1z" fill="#b8b4d8" stroke="#6c68a0" />
          <path d="M5 4h6M5 6h6" stroke="#6c68a0" />
          <circle cx="6" cy="10.500" r="5" fill="#4cb848" stroke="#207a20" />
          <path d="m3.500 10.500 2 2 3-4" fill="none" stroke="#fff" strokeWidth="1.600" />
        </svg>
        Máy chủ : .\MISAMIMOSA2019
      </StatusCell>
      <StatusCell className="w-[148px] pl-px">
        <svg viewBox="0 0 16 16" className="size-4 shrink-0" aria-hidden>
          <path d="M2.500 3v10c0 3 10 3 10 0V3z" fill="#fbd65c" stroke="#b8922c" />
          <ellipse cx="7.500" cy="3" rx="5" ry="2" fill="#fff0a8" stroke="#b8922c" />
          <path d="M2.500 8c0 2.500 10 2.500 10 0" fill="none" stroke="#b8922c" />
        </svg>
        Tên DLKT: THUNGHIEM
      </StatusCell>
      <StatusCell className="w-[123px] pl-px">
        <svg viewBox="0 0 16 16" className="size-4 shrink-0" aria-hidden>
          <path d="M2 15c0-4 2-6 4-6h3c3 0 5 3 5 6z" fill="#8cc8f4" stroke="#2f7cb8" />
          <path d="m7 9 2 5 1-5z" fill="#fff" />
          <circle cx="8.500" cy="5" r="3.300" fill="#f8cf7c" stroke="#a8742c" strokeWidth=".7" />
          <path d="M5 4c0-4 7-4.500 7.300 0L9 3z" fill="#3c2c14" />
        </svg>
        Người dùng: ADMIN
      </StatusCell>
      <StatusCell className="w-[135px] justify-center">
        <b className="text-[#0000f0]">Tư vấn hỗ trợ: 19008677</b>
      </StatusCell>
      <StatusCell className="flex-1" />
      <StatusCell className="w-[31px] justify-center">OVR</StatusCell>
      <StatusCell className="w-[32px] justify-center">NUM</StatusCell>
      <StatusCell className="w-[37px]" />
      <StatusCell className="w-[36px]" />
      <StatusCell className="w-[75px] pl-px">
        <svg viewBox="0 0 16 16" className="size-4 shrink-0" aria-hidden>
          <circle cx="8" cy="8" r="7" fill="#d8f0f8" stroke="#8c8c8c" strokeWidth="1.500" />
          <path d="M8 2.500v1.500M8 12v1.500M2.500 8H4M12 8h1.500" stroke="#d84030" />
          <path d="m5 6 3 2.500L11 6" fill="none" stroke="#286878" />
        </svg>
        4:21 CH
      </StatusCell>
      <StatusCell className="w-[62px] justify-center">20/06/2018</StatusCell>
    </footer>
  )
}

function TaskButton({ label, framed, active, stacked, className, children }: { label: string; framed?: boolean; active?: boolean; stacked?: boolean; className: string; children: ReactNode }) {
  return (
    <>
      <button
        aria-label={label}
        className={clsx(
          'flex items-center justify-center rounded-[3px] border',
          framed ? 'border-[#55677d] inset-ring inset-ring-white/50' : 'border-transparent',
          framed && (active ? 'bg-linear-to-b from-[#e4ecf5] to-[#b9cbe0]' : 'bg-linear-to-b from-[#bccde2] to-[#a3b9d2]'),
          className,
        )}
      >
        {children}
      </button>
      {stacked && <span className="w-[5px] rounded-r-[3px] border border-l-0 border-[#55677d] bg-[#b4c7de]" />}
    </>
  )
}

function Taskbar() {
  return (
    <footer className="flex h-10 shrink-0 border-t border-[#46566b] bg-linear-to-r from-[#8a9cb5] via-[#a6bfdb] via-10% to-[#a6bfdb] to-100%">
      <button aria-label="Start" className="ml-2 flex w-[38px] items-center justify-center">
        <svg viewBox="0 0 38 38" className="size-[38px]">
          <defs>
            <radialGradient id="orb" cx=".5" cy=".85" r=".8">
              <stop offset="0" stopColor="#52c8f0" />
              <stop offset=".5" stopColor="#1f62a4" />
              <stop offset="1" stopColor="#2d4b6e" />
            </radialGradient>
          </defs>
          <circle cx="19" cy="19" r="17.500" fill="url(#orb)" stroke="#22405f" />
          <path d="M5 15a15 13 0 0 1 28 0c-8 4-20 4-28 0z" fill="#fff" opacity=".35" />
          <path d="M11 11c3-2 5-2 8 0l-2 7c-3-2-5-2-8 0z" fill="#ee5a26" />
          <path d="M20.500 11.500c3 2 5 2 8.500.5l-2 7c-3 1.500-5 1.500-8.500-.5z" fill="#8cc63c" />
          <path d="M8.500 20c3-2 5-2 8 0l-2 7c-3-2-5-2-8 0z" fill="#3fa2e4" />
          <path d="M18 20.500c3 2 5 2 8.500.5l-2 7c-3 1.500-5 1.500-8.500-.5z" fill="#fcc92c" />
        </svg>
      </button>
      <TaskButton label="Windows Explorer" framed stacked className="ml-[13px] w-[55px]">
        <svg viewBox="0 0 34 30" className="h-[30px] w-[34px]" aria-hidden>
          <path d="M2 4h9l2 2h18v22H2z" fill="#f4dc8c" stroke="#b89a4c" />
          <path d="M4 2h6v4H4z" fill="#49a43c" /><path d="M14 3h6v4h-6z" fill="#fff" stroke="#ccc" /><path d="M18 4h2v2h-2z" fill="#d8402c" /><path d="M22 5h7v3h-7z" fill="#48a0dc" />
          <path d="M2 9h29l1 19H1z" fill="#fbeeb4" stroke="#c8aa5a" />
          <path d="M6 29v-8c0-2 1-3 3-3h16c2 0 3 1 3 3v8h-5v-6H11v6z" fill="#9fd4f2" stroke="#5ca4cc" />
        </svg>
      </TaskButton>
      <TaskButton label="Internet Explorer" className="ml-[2px] w-[59px]">
        <svg viewBox="0 0 34 32" className="h-8 w-[34px]" aria-hidden>
          <circle cx="18" cy="17" r="9" fill="none" stroke="#1a6fc4" strokeWidth="6" />
          <path d="M12 15h14v4H12z" fill="#1a6fc4" />
          <path d="M20 19h10v4h-7z" fill="#a6bfdb" />
          <path d="M11 10c4-4 10-4 14 0" fill="none" stroke="#7cc4f2" strokeWidth="2" />
          <path d="M4 30C-1 26 8 12 20 5c6-4 12-5 11 0-3-3-9 1-14 5C9 16 4 24 7 28c1 1 3 1 5 0-3 2-6 3-8 2z" fill="#f8bb2c" stroke="#c88a14" strokeWidth=".5" />
        </svg>
      </TaskButton>
      <TaskButton label="Cốc Cốc" className="ml-[2px] w-[59px]">
        <svg viewBox="0 0 32 32" className="size-8" aria-hidden>
          <circle cx="15" cy="17" r="14.500" fill="#fff" />
          <path d="M16 4.500A12.500 12.500 0 1 0 28 15l-6 1.500a6.500 6.500 0 1 1-6-6z" fill="#4fae3f" />
          <circle cx="15" cy="17.500" r="3.500" fill="#4fae3f" />
          <path d="M16 2h4l-1 9-3 2zM24 4l5-2-7 11-3 1z" fill="#f05a28" stroke="#fff" strokeWidth=".6" />
          <path d="m22 15 9-7-1 6z" fill="#f58a3c" stroke="#fff" strokeWidth=".6" />
        </svg>
      </TaskButton>
      <TaskButton label="Google Chrome" framed className="ml-[3px] w-[60px]">
        <svg viewBox="0 0 30 30" className="size-[30px]" aria-hidden>
          <circle cx="15" cy="15" r="14.500" fill="#fdd04b" />
          <path d="M2.400 7.800A14.500 14.500 0 0 1 27.600 7.800H15L9 18.500z" fill="#dd4b3e" />
          <path d="M2.400 7.800A14.500 14.500 0 0 0 15 29.500l6.200-11H8.800z" fill="#1da261" />
          <circle cx="15" cy="15" r="7" fill="#fff" />
          <circle cx="15" cy="15" r="5.500" fill="#4a8af4" />
        </svg>
      </TaskButton>
      <TaskButton label="Excel" framed className="ml-[2px] w-[60px]">
        <svg viewBox="0 0 32 32" className="size-8" aria-hidden>
          <path d="M5 1h22l1 22H2V7z" fill="#e8f4e0" stroke="#58a43c" strokeWidth="1.500" />
          <path d="m12 6 19 2-2 23-18-2z" fill="#fbfdf9" stroke="#a8b4a4" />
          <path d="M22 11h7v4h-7zM22 17h6v4h-6zM21 23h7v4h-7zM14 23h5v4h-5zM7 23h5v3H7z" fill="#6cba52" />
          <path d="M6 7h6l3 4 5-5h2l-6 7 5 7h-5l-3-4-5 5H6l5-7z" fill="#1f6a2c" />
        </svg>
      </TaskButton>
      <TaskButton label="MISA Mimosa.NET" framed active className="ml-[2px] w-[60px]">
        <MisaLogo className="size-8" />
      </TaskButton>
      <TaskButton label="Word" framed stacked className="ml-[2px] w-[55px]">
        <svg viewBox="0 0 32 32" className="size-8" aria-hidden>
          <path d="M5 1h22l1 24H2V7z" fill="#dce8f8" stroke="#5a84cc" strokeWidth="1.500" />
          <path d="m11 4 20 1-2 26-19-2z" fill="#fdfdff" stroke="#a4aebc" />
          <path d="M22 9h6M22 12h6M22 15h6M13 19h15M13 22h14M13 25h12" stroke="#2f5cb4" strokeWidth="1.500" />
          <text x="14" y="17" textAnchor="middle" fontSize="14" fontWeight="700" fontStyle="italic" fill="#1f479c" fontFamily="Liberation Serif">W</text>
        </svg>
      </TaskButton>
      <div className="flex-1" />
      <div className="flex items-center bg-linear-to-r from-transparent to-[#8093ab] to-10% pl-[44px] text-[12px] text-white">
        <svg viewBox="0 0 9 6" className="mr-[10px] h-[6px] w-[9px]" aria-hidden><path d="m4.500.5 4 4.500h-8z" fill="#fff" stroke="#445" strokeWidth=".5" /></svg>
        <svg viewBox="0 0 18 17" className="mr-[7px] h-[17px] w-[18px]" aria-hidden>
          <path d="M2 1.500h2V16H2z" fill="#fff" stroke="#333c48" strokeWidth=".7" />
          <path d="M4 2.500c3-1.500 4 1.500 6 1.500h6.500l-1.500 6c-3 1-4-1-6-1s-3-.500-5 .5z" fill="#fff" stroke="#333c48" strokeWidth=".7" />
        </svg>
        <svg viewBox="0 0 17 17" className="mr-[10px] size-[17px]" aria-hidden>
          <path d="M4.500 4h11v8.500h-11z" fill="#6c7c94" stroke="#fff" strokeWidth="1.600" />
          <path d="M7 15.500h7M10.500 13v2" stroke="#fff" strokeWidth="1.500" />
          <path d="M1.500 1v4h3V1M3 5v9h3" fill="none" stroke="#fff" strokeWidth="1.500" />
        </svg>
        <svg viewBox="0 0 12 16" className="mr-[20px] h-4 w-3" aria-hidden><path d="M1 5h3l4-4v14l-4-4H1z" fill="#fff" stroke="#333c48" strokeWidth=".7" /></svg>
        <div className="w-[58px] text-center leading-[17px]">
          <div>4:21 PM</div>
          <div>20/06/2018</div>
        </div>
        <button aria-label="Hiện màn hình" className="ml-[11px] h-full w-[14px] border border-[#c4d0dc] bg-linear-to-b from-[#7c8a9c] to-[#4c5a6c]" />
      </div>
    </footer>
  )
}

export default function App() {
  return (
    <div className="flex h-screen flex-col overflow-hidden bg-[#c4d9fa] font-['Roboto',sans-serif] text-black">
      <TitleBar />
      <div className="bg-linear-to-r from-[#9dbbf6] to-[#c4dafb]">
        <MenuBar />
        <Toolbar />
      </div>
      <main className="flex min-h-0 flex-1 pl-[3px] font-['Liberation_Sans',sans-serif] text-[11px]">
        <SidePane />
        <div className="mx-[6px] mt-[3px] ml-[3px] flex min-w-0 flex-1 flex-col">
          <VoucherGrid />
          <DetailGrid />
        </div>
        <SetupPane />
      </main>
      <div className="shrink-0 font-['Liberation_Sans',sans-serif]">
        <StatusBar />
      </div>
      <Taskbar />
    </div>
  )
}
